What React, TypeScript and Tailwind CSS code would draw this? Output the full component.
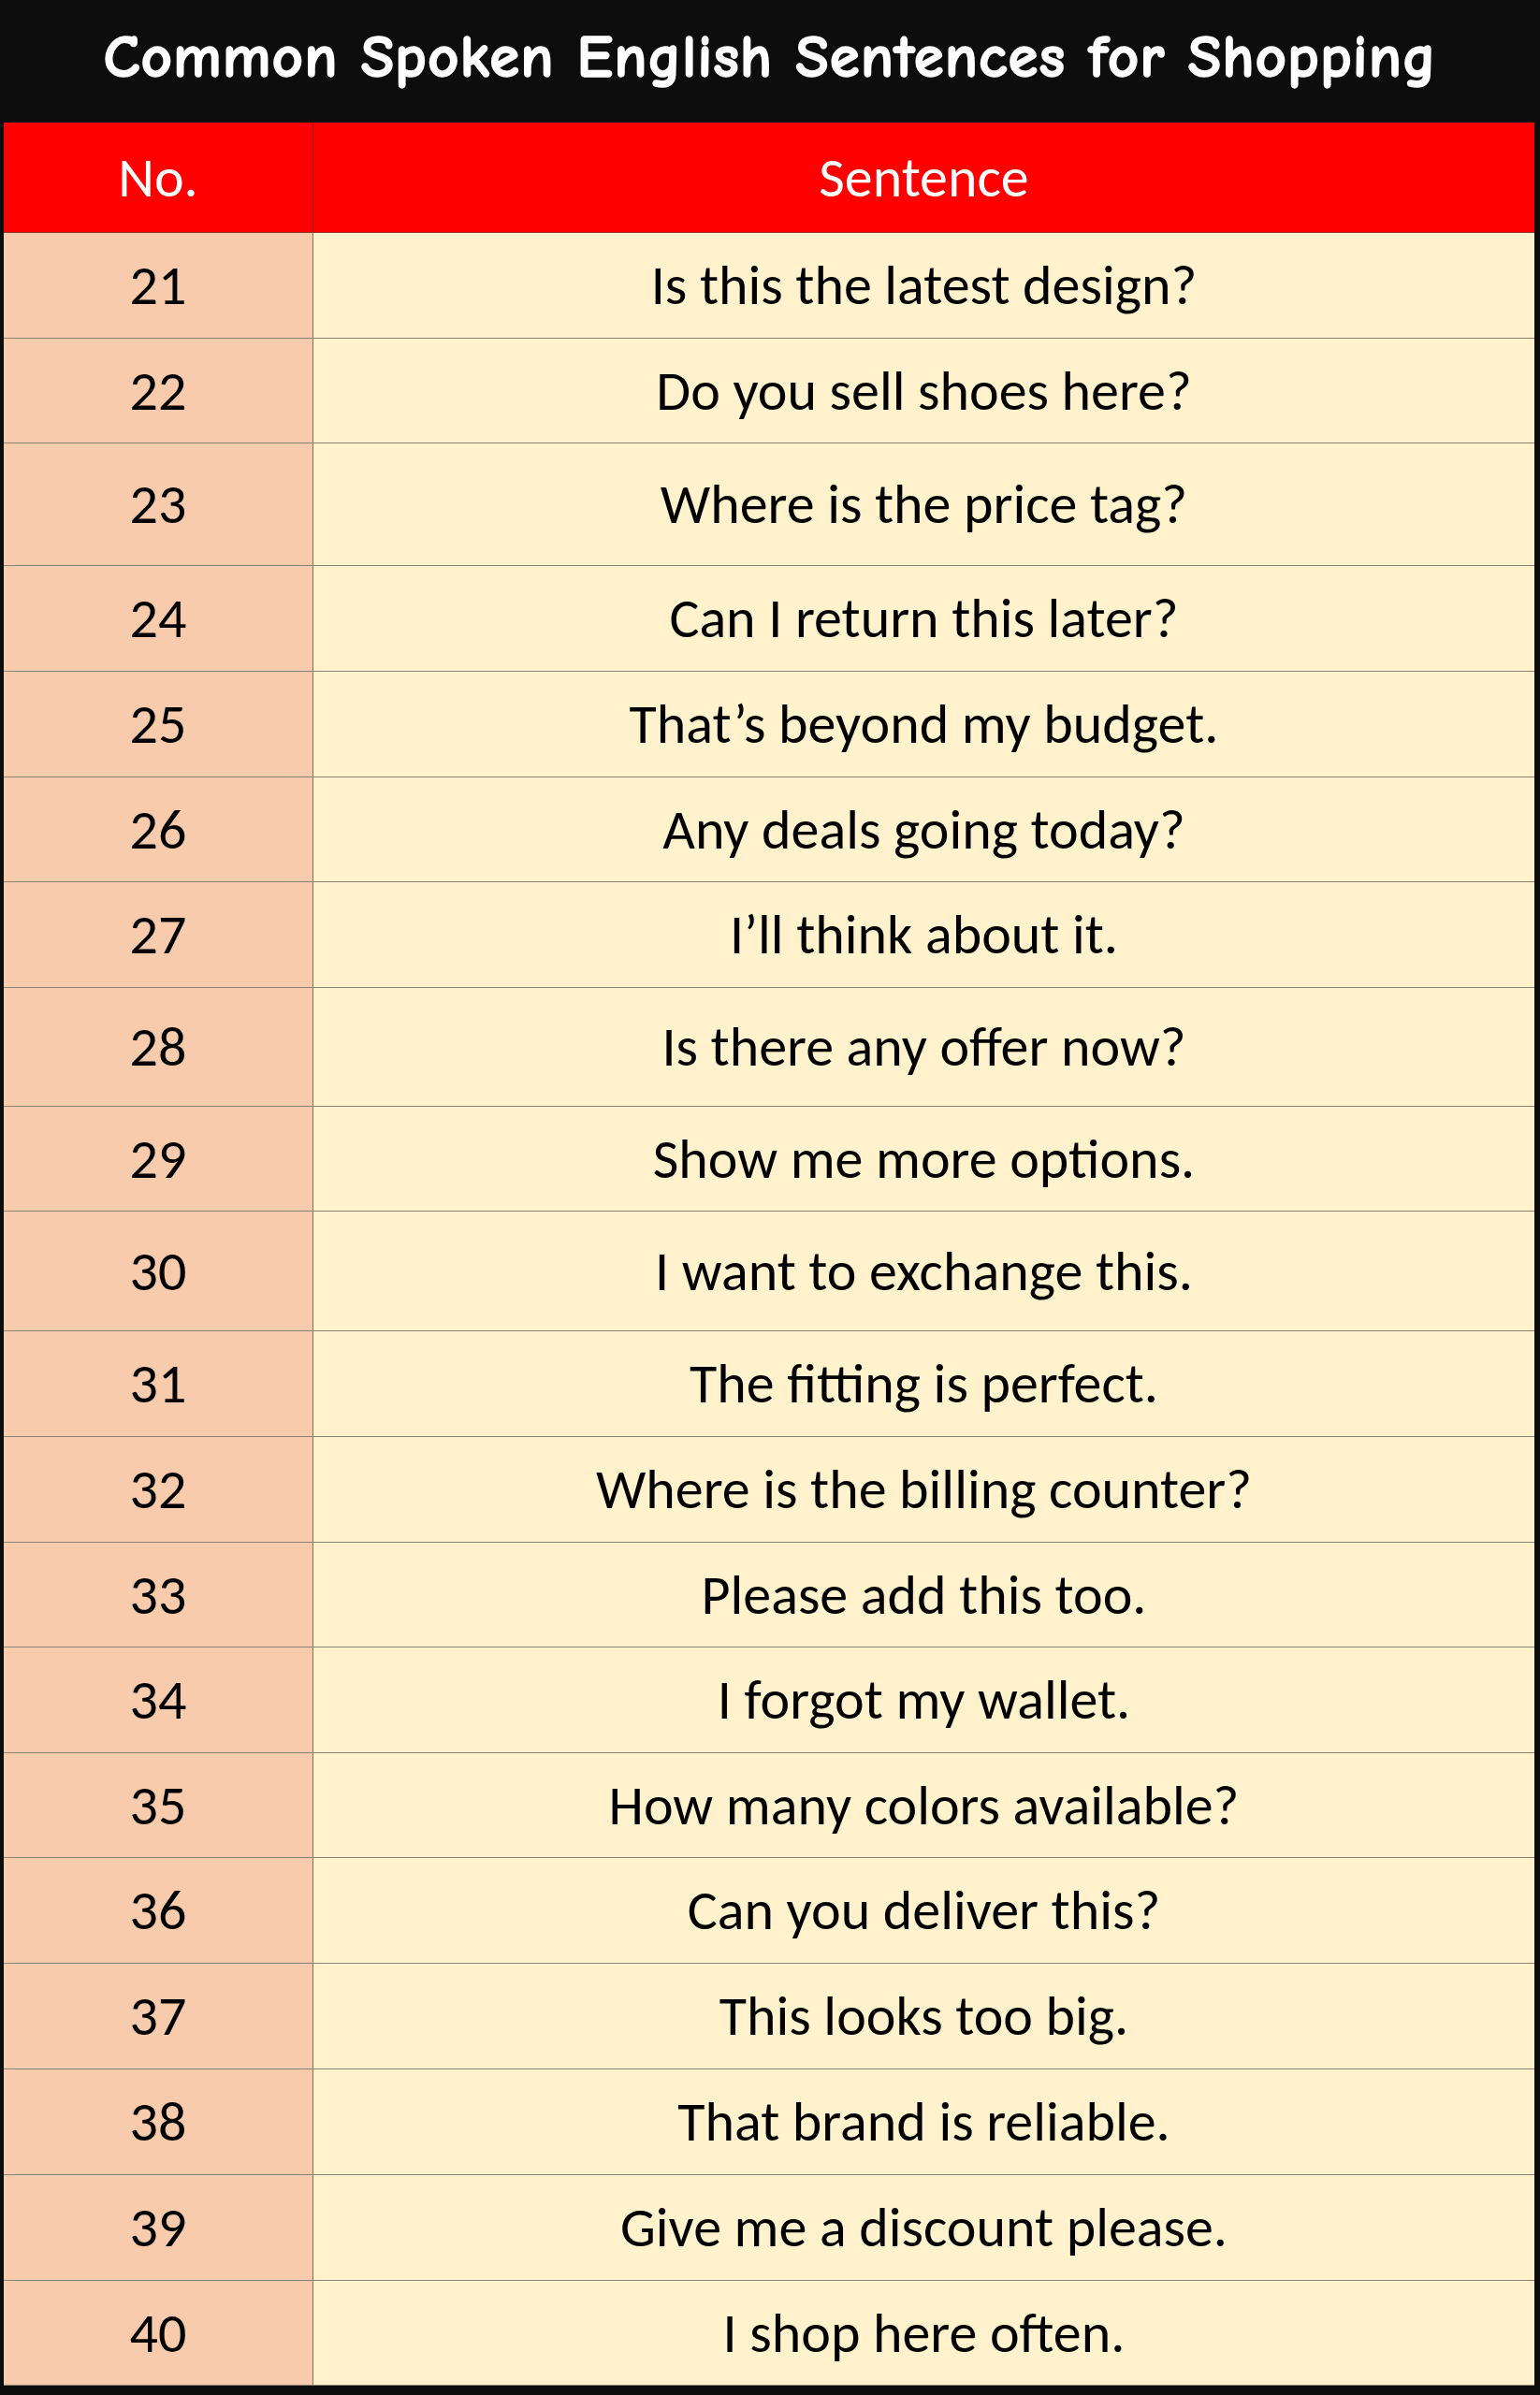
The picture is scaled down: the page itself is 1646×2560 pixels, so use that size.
import React from "react";

const rows: [string, string, number][] = [
  ["21", "Is this the latest design?", 113],
  ["22", "Do you sell shoes here?", 112],
  ["23", "Where is the price tag?", 131],
  ["24", "Can I return this later?", 113],
  ["25", "That’s beyond my budget.", 113],
  ["26", "Any deals going today?", 112],
  ["27", "I’ll think about it.", 113],
  ["28", "Is there any offer now?", 127],
  ["29", "Show me more options.", 112],
  ["30", "I want to exchange this.", 128],
  ["31", "The fitting is perfect.", 113],
  ["32", "Where is the billing counter?", 113],
  ["33", "Please add this too.", 112],
  ["34", "I forgot my wallet.", 113],
  ["35", "How many colors available?", 112],
  ["36", "Can you deliver this?", 113],
  ["37", "This looks too big.", 113],
  ["38", "That brand is reliable.", 113],
  ["39", "Give me a discount please.", 113],
  ["40", "I shop here often.", 112],
];

export default function App() {
  return (
    <div className="w-[1646px] h-[2560px] bg-[#0d0d0d] flex flex-col">
      <div className="h-[131px] flex items-center justify-center">
        <h1
          className="text-white font-bold text-[65px] tracking-[1px] pb-[8px]"
          style={{
            fontFamily: '"Comic Sans MS", "Comic Neue", "DejaVu Sans", sans-serif',
            WebkitTextStroke: "1.5px white",
          }}
        >
          Common Spoken English Sentences for Shopping
        </h1>
      </div>
      <div
        className="ml-[4px] mr-[6px] flex flex-col"
        style={{ fontFamily: 'Calibri, Carlito, Lato, sans-serif' }}
      >
        <div className="h-[118px] flex bg-[#ff0000] border-b border-[#8c3a2a] text-white text-[60px]">
          <div className="w-[331px] border-r border-[#7a1a10] flex items-center justify-center">No.</div>
          <div className="flex-1 flex items-center justify-center">Sentence</div>
        </div>
        {rows.map(([n, s, h]) => (
          <div
            key={n}
            className="flex border-b border-[#8a8478] text-black text-[60px]"
            style={{ height: h }}
          >
            <div className="w-[331px] bg-[#f8cbad] border-r border-[#7d7468] flex items-center justify-center">
              {n}
            </div>
            <div className="flex-1 bg-[#fff2cc] flex items-center justify-center">{s}</div>
          </div>
        ))}
      </div>
    </div>
  );
}
